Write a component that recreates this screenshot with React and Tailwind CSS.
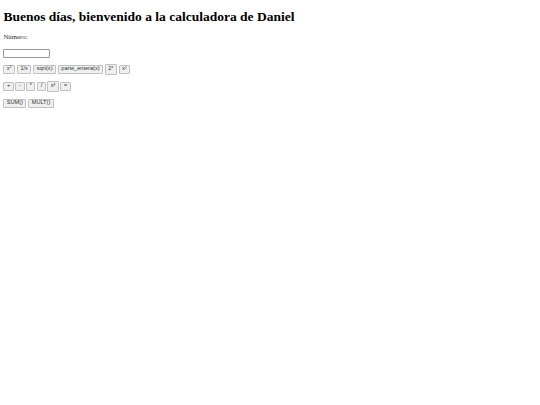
export default function App() {
  const btn =
    "h-[9px] px-[2.4px] flex items-center justify-center border border-[#c0c0c0] bg-[#efefef] rounded-[1px] text-[5.6px] leading-none text-[#333] font-normal";
  const op = btn + " !px-[2.6px]";
  const sans = { fontFamily: '"Liberation Sans", Arial, sans-serif' };
  const sup = "text-[3.7px] relative -top-[1.5px] leading-none";
  return (
    <div className="w-[540px] h-[405px] bg-white px-[3.4px] pt-[9px]" style={{ fontFamily: '"Liberation Serif", "Times New Roman", serif' }}>
      <h1 className="text-[13.5px] font-bold leading-[15.5px] text-black">
        Buenos días, bienvenido a la calculadora de Daniel
      </h1>
      <p className="mt-[8.5px] text-[6.8px] leading-[8px] text-[#333] font-normal">Número:</p>
      <div className="mt-[8px]">
        <div className="w-[47px] h-[9px] border border-[#999] bg-white rounded-[1px]" />
      </div>
      <div className="mt-[5.5px] flex items-center gap-[2px]" style={sans}>
        <button className={btn}>x<sup className={sup}>2</sup></button>
        <button className={btn}>1/x</button>
        <button className={btn}>sqrt(x)</button>
        <button className={btn}>parte_entera(x)</button>
        <button className={btn + " !h-[11px]"}>2<sup className={sup}>x</sup></button>
        <button className={btn}>x!</button>
      </div>
      <div className="mt-[6px] flex items-center gap-[1.6px]" style={sans}>
        <button className={op}>+</button>
        <button className={op}>-</button>
        <button className={op}>*</button>
        <button className={op}>/</button>
        <button className={btn + " !h-[11px]"}>x<sup className={sup}>y</sup></button>
        <button className={op}>=</button>
      </div>
      <div className="mt-[7px] flex items-center gap-[2px]" style={sans}>
        <button className={btn}>SUM()</button>
        <button className={btn}>MULT()</button>
      </div>
    </div>
  );
}
